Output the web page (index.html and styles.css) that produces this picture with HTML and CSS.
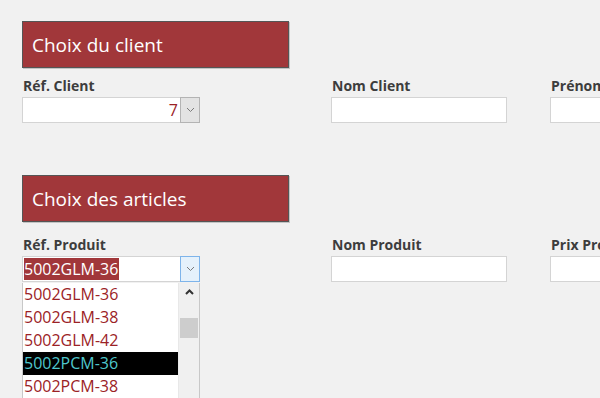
FILE: index.html
```html
<!DOCTYPE html>
<html lang="fr">
<head>
    <meta charset="UTF-8">
    <title>Commande</title>
    <link rel="stylesheet" href="styles.css">
</head>
<body>

<div class="page">

    <!-- Bloc client -->
    <div class="section">
        <div class="section-title">Choix du client</div>
        <div class="fields">
            <div class="field">
                <div class="label">Réf. Client</div>
                <div class="combo">
                    <div class="combo-value right">7</div>
                    <div class="combo-btn">
                        <svg width="9" height="6" viewBox="0 0 9 6"><path d="M1 1l3.5 3.5L8 1" fill="none" stroke="#7a7a7a" stroke-width="1"/></svg>
                    </div>
                </div>
            </div>
            <div class="field">
                <div class="label">Nom Client</div>
                <div class="textbox"></div>
            </div>
            <div class="field">
                <div class="label">Prénom Client</div>
                <div class="textbox wide"></div>
            </div>
        </div>
    </div>

    <!-- Bloc articles -->
    <div class="section second">
        <div class="section-title">Choix des articles</div>
        <div class="fields">
            <div class="field">
                <div class="label">Réf. Produit</div>
                <div class="combo">
                    <div class="combo-value"><span class="selected-text">5002GLM-36</span></div>
                    <div class="combo-btn active">
                        <svg width="9" height="6" viewBox="0 0 9 6"><path d="M1 1l3.5 3.5L8 1" fill="none" stroke="#7a7a7a" stroke-width="1"/></svg>
                    </div>
                </div>
                <div class="listbox">
                    <ul class="items">
                        <li>5002GLM-36</li>
                        <li>5002GLM-38</li>
                        <li>5002GLM-42</li>
                        <li class="current">5002PCM-36</li>
                        <li>5002PCM-38</li>
                    </ul>
                    <div class="scrollbar">
                        <svg class="arrow-up" width="9" height="6" viewBox="0 0 9 6"><path d="M1 5l3.5-3.5L8 5" fill="none" stroke="#333" stroke-width="2"/></svg>
                        <div class="thumb"></div>
                    </div>
                </div>
            </div>
            <div class="field">
                <div class="label">Nom Produit</div>
                <div class="textbox"></div>
            </div>
            <div class="field">
                <div class="label">Prix Produit</div>
                <div class="textbox wide"></div>
            </div>
        </div>
    </div>

</div>

</body>
</html>
```

FILE: styles.css
```css
html, body {
    margin: 0;
    height: 100%;
    overflow: hidden;
}

body {
    background: #f1f1f1;
    font-family: "Open Sans", "Noto Sans", sans-serif;
}

.page {
    padding: 21px 0 0 22px;
}

.section.second {
    margin-top: 52px;
}

.section-title {
    box-sizing: border-box;
    width: 267px;
    height: 47px;
    background: #a1373a;
    border: 1px solid #555;
    box-shadow: 1px 1px 0 #c4c4c4;
    color: #fff;
    font-size: 19px;
    padding-left: 9px;
    display: flex;
    align-items: center;
}

.fields {
    display: grid;
    grid-template-columns: 309px 219px 1fr;
    margin-top: 9px;
}

.section.second .fields {
    margin-top: 14px;
}

.label {
    font-size: 14px;
    font-weight: bold;
    color: #3d3d3d;
    line-height: 18px;
    height: 20px;
    padding-left: 1px;
    white-space: nowrap;
}

.textbox {
    box-sizing: border-box;
    width: 176px;
    height: 26px;
    background: #fff;
    border: 1px solid #d4d4d4;
}

.textbox.wide {
    width: 200px;
}

.combo {
    box-sizing: border-box;
    width: 178px;
    height: 26px;
    background: #fff;
    border: 1px solid #d4d4d4;
    display: flex;
}

.combo-value {
    flex: 1;
    font-size: 16px;
    color: #9b2226;
    line-height: 22px;
    padding: 1px 1px 0 1px;
}

.combo-value.right {
    text-align: right;
    padding-right: 2px;
}

.selected-text {
    background: #a1373a;
    color: #fff;
    display: inline-block;
    padding-right: 1px;
}

.combo-btn {
    box-sizing: border-box;
    width: 20px;
    margin: -1px -1px -1px 0;
    background: #e3e3e3;
    border: 1px solid #b4b4b4;
    display: flex;
    align-items: center;
    justify-content: center;
}

.combo-btn.active {
    background: #e5f1fb;
    border-color: #7eb4ea;
}

.listbox {
    box-sizing: border-box;
    width: 178px;
    height: 140px;
    margin-top: 1px;
    background: #fff;
    border: 1px solid #c8c8c8;
    border-top: none;
    display: flex;
}

.items {
    flex: 1;
    list-style: none;
    margin: 0;
    padding: 0;
}

.items li {
    height: 23px;
    line-height: 23px;
    font-size: 16px;
    color: #9b2226;
    padding-left: 1px;
}

.items li.current {
    background: #000;
    color: #4fc7cc;
}

.scrollbar {
    width: 20px;
    background: #f0f0f0;
    border-left: 1px solid #e8e8e8;
    position: relative;
}

.arrow-up {
    position: absolute;
    left: 6px;
    top: 6px;
}

.thumb {
    position: absolute;
    left: 1px;
    right: 1px;
    top: 35px;
    height: 20px;
    background: #cdcdcd;
}
```
